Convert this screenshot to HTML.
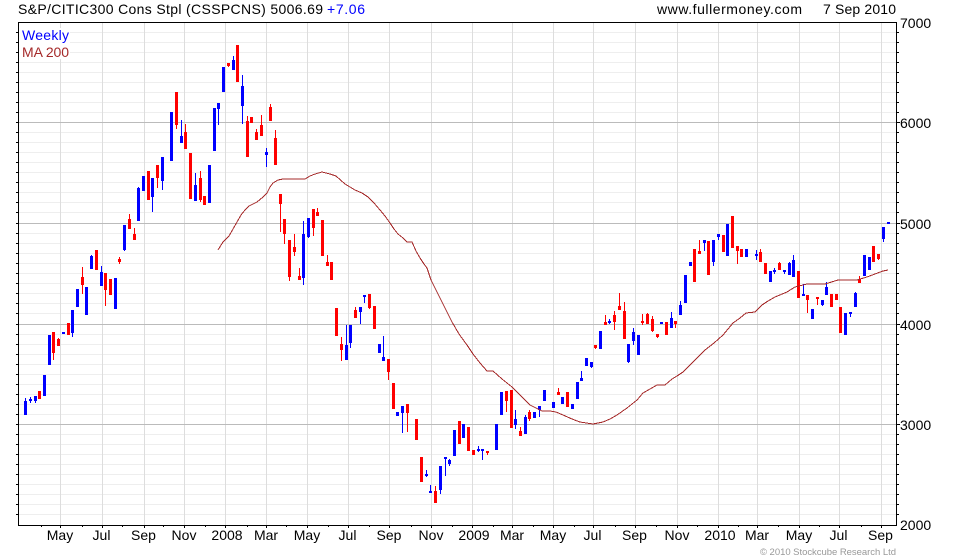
<!DOCTYPE html>
<html><head><meta charset="utf-8"><title>Chart</title>
<style>
html,body{margin:0;padding:0;background:#fff;width:980px;height:560px;overflow:hidden}
svg{display:block}
text{font-family:"Liberation Sans",Arial,sans-serif;font-size:14px;fill:#000}
</style></head><body>
<svg width="980" height="560" viewBox="0 0 980 560" xmlns="http://www.w3.org/2000/svg">
<rect width="980" height="560" fill="#fff"/>
<g shape-rendering="crispEdges" fill="none">
<path stroke="#eeeeee" d="M18 32.5H896M18 42.5H896M18 52.5H896M18 62.5H896M18 72.5H896M18 82.5H896M18 92.5H896M18 102.5H896M18 112.5H896M18 132.5H896M18 142.5H896M18 152.5H896M18 162.5H896M18 172.5H896M18 182.5H896M18 192.5H896M18 202.5H896M18 212.5H896M18 233.5H896M18 243.5H896M18 253.5H896M18 263.5H896M18 273.5H896M18 283.5H896M18 293.5H896M18 303.5H896M18 313.5H896M18 334.5H896M18 344.5H896M18 354.5H896M18 364.5H896M18 374.5H896M18 384.5H896M18 394.5H896M18 404.5H896M18 414.5H896M18 434.5H896M18 444.5H896M18 454.5H896M18 464.5H896M18 474.5H896M18 484.5H896M18 494.5H896M18 504.5H896M18 514.5H896"/>
<path stroke="#dddddd" d="M60.5 22V525M102.5 22V525M144.5 22V525M184.5 22V525M225.5 22V525M266.5 22V525M307.5 22V525M348.5 22V525M389.5 22V525M431.5 22V525M472.5 22V525M512.5 22V525M553.5 22V525M593.5 22V525M635.5 22V525M677.5 22V525M718.5 22V525M757.5 22V525M799.5 22V525M839.5 22V525M881.5 22V525"/>
<path stroke="#bbbbbb" d="M18 122.5H896M18 223.5H896M18 324.5H896M18 424.5H896"/>
<rect x="19" y="28" width="51" height="31" fill="#fff" stroke="none"/>

<!-- blue bodies -->
<path stroke="#0000ff" stroke-width="3" d="M25.5 401V415M30.5 399V401M35.5 396V401M44.5 375V396M49.5 335V365M63.5 332V334M72.5 310V333M77.5 289V307M86.5 287V315M91.5 256V269M101.5 272V286M115.5 278V309M124.5 225V250M138.5 188V221M143.5 176V191M152.5 178V197M162.5 157V181M171.5 112V161M181.5 136V143M195.5 185V201M209.5 165V203M214.5 108V151M218.5 103V109M223.5 67V92M233.5 60V70M242.5 86V106M266.5 152V155M303.5 234V278M308.5 218V237M346.5 345V360M350.5 325V343M360.5 307V312M364.5 295V297M379.5 344V353M383.5 357V361M397.5 412V416M402.5 406V413M426.5 474V476M430.5 491V493M440.5 466V490M445.5 457V459M449.5 460V464M454.5 430V456M463.5 424V438M478.5 449V451M482.5 449V451M496.5 424V450M501.5 392V415M515.5 419V425M525.5 417V434M534.5 412V418M539.5 406V410M544.5 390V401M553.5 402V408M562.5 397V404M572.5 404V409M577.5 382V399M581.5 378V381M586.5 358V366M591.5 362V367M600.5 331V349M609.5 321V323M628.5 344V362M633.5 332V341M638.5 335V355M661.5 322V324M671.5 318V328M680.5 305V315M685.5 275V303M690.5 262V266M704.5 240V243M713.5 240V262M718.5 234V237M727.5 224V256M746.5 249V257M756.5 254V256M770.5 271V282M774.5 270V272M784.5 270V272M789.5 263V275M793.5 260V277M803.5 294V296M812.5 309V319M822.5 300V305M826.5 287V295M845.5 313V335M850.5 312V314M855.5 293V307M864.5 255V276M869.5 257V270M883.5 227V239M888.5 222V224"/>
<!-- blue wicks -->
<path stroke="#0000ff" stroke-width="1" d="M25.5 398V415M30.5 397V403M35.5 396V403M72.5 310V337M91.5 255V269M101.5 266V286M124.5 225V251M138.5 187V221M152.5 178V212M162.5 157V190M181.5 120V143M195.5 173V201M218.5 103V125M233.5 56V70M242.5 75V124M266.5 148V167M303.5 221V285M308.5 218V238M346.5 325V360M350.5 325V348M360.5 307V324M364.5 295V303M383.5 336V361M402.5 406V433M426.5 470V477M430.5 485V493M440.5 466V494M445.5 457V476M449.5 459V466M478.5 446V452M482.5 449V460M515.5 410V429M525.5 415V434M539.5 406V417M581.5 371V381M591.5 362V368M609.5 319V324M628.5 344V363M633.5 328V345M671.5 312V328M680.5 301V315M704.5 240V251M713.5 240V266M718.5 234V240M756.5 250V260M774.5 268V274M784.5 270V274M789.5 262V275M793.5 255V277M803.5 284V296M822.5 300V306M826.5 282V295M850.5 312V317M855.5 292V307M883.5 227V242"/>
<!-- red bodies -->
<path stroke="#ff0000" stroke-width="3" d="M39.5 391V399M53.5 332V353M58.5 339V346M68.5 323V335M82.5 277V285M96.5 250V270M105.5 273V290M110.5 279V295M119.5 259V262M129.5 219V229M134.5 234V240M148.5 171V200M157.5 165V178M176.5 92V125M185.5 132V149M190.5 153V199M200.5 178V200M204.5 196V205M228.5 63V66M237.5 45V82M247.5 121V157M251.5 117V123M256.5 132V140M261.5 125V136M270.5 107V121M275.5 138V165M280.5 194V204M284.5 219V234M289.5 240V277M294.5 247V252M299.5 276V280M313.5 209V228M317.5 212V216M322.5 220V256M327.5 262V266M331.5 262V280M336.5 308V336M341.5 344V350M355.5 310V318M369.5 294V308M374.5 306V329M388.5 359V372M393.5 383V409M407.5 404V413M416.5 419V440M421.5 457V482M435.5 491V503M459.5 421V444M468.5 427V451M473.5 450V455M487.5 451V453M506.5 391V401M511.5 390V428M520.5 431V436M529.5 412V419M558.5 392V395M567.5 392V407M595.5 345V348M605.5 322V325M614.5 315V322M619.5 306V310M624.5 311V339M642.5 321V323M647.5 314V324M652.5 319V331M657.5 334V337M666.5 322V335M675.5 321V324M694.5 249V282M699.5 251V254M708.5 241V275M723.5 235V252M732.5 216V248M737.5 246V251M741.5 249V257M760.5 252V262M765.5 263V274M779.5 263V270M798.5 271V298M807.5 295V300M817.5 297V299M831.5 294V307M836.5 294V300M840.5 307V333M859.5 279V283M873.5 246V262M878.5 254V259"/>
<!-- red wicks -->
<path stroke="#ff0000" stroke-width="1" d="M53.5 332V360M58.5 338V346M82.5 267V294M105.5 273V306M119.5 257V264M129.5 214V229M134.5 228V240M157.5 165V188M176.5 92V129M185.5 124V149M200.5 171V202M228.5 63V67M247.5 116V157M256.5 129V140M261.5 115V136M270.5 104V121M275.5 130V165M280.5 194V232M284.5 219V244M289.5 240V281M294.5 234V256M299.5 268V280M313.5 209V236M317.5 208V216M327.5 255V266M341.5 337V361M355.5 307V318M369.5 294V309M388.5 359V380M407.5 404V432M435.5 486V503M487.5 451V455M506.5 391V412M520.5 427V436M529.5 410V421M558.5 388V395M595.5 345V349M605.5 315V325M614.5 311V330M619.5 293V310M624.5 302V339M642.5 314V325M647.5 313V324M652.5 316V332M657.5 334V338M675.5 321V328M699.5 240V254M737.5 246V264M760.5 249V262M779.5 262V270M807.5 295V313M817.5 297V305M859.5 276V283M878.5 254V260"/>

<!-- axes -->
<path stroke="#000" d="M18.5 22V526M18 22.5H897M896.5 22V526M18 525.5H897"/>
<path stroke="#000" d="M16 32.5h2M16 42.5h2M16 52.5h2M16 62.5h2M16 72.5h2M16 82.5h2M16 92.5h2M16 102.5h2M16 112.5h2M16 122.5h2M16 132.5h2M16 142.5h2M16 152.5h2M16 162.5h2M16 172.5h2M16 182.5h2M16 192.5h2M16 202.5h2M16 212.5h2M16 223.5h2M16 233.5h2M16 243.5h2M16 253.5h2M16 263.5h2M16 273.5h2M16 283.5h2M16 293.5h2M16 303.5h2M16 313.5h2M16 324.5h2M16 334.5h2M16 344.5h2M16 354.5h2M16 364.5h2M16 374.5h2M16 384.5h2M16 394.5h2M16 404.5h2M16 414.5h2M16 424.5h2M16 434.5h2M16 444.5h2M16 454.5h2M16 464.5h2M16 474.5h2M16 484.5h2M16 494.5h2M16 504.5h2M16 514.5h2"/>
<path stroke="#000" d="M897 32.5h2M897 42.5h2M897 52.5h2M897 62.5h2M897 72.5h2M897 82.5h2M897 92.5h2M897 102.5h2M897 112.5h2M897 122.5h3M897 132.5h2M897 142.5h2M897 152.5h2M897 162.5h2M897 172.5h2M897 182.5h2M897 192.5h2M897 202.5h2M897 212.5h2M897 223.5h3M897 233.5h2M897 243.5h2M897 253.5h2M897 263.5h2M897 273.5h2M897 283.5h2M897 293.5h2M897 303.5h2M897 313.5h2M897 324.5h3M897 334.5h2M897 344.5h2M897 354.5h2M897 364.5h2M897 374.5h2M897 384.5h2M897 394.5h2M897 404.5h2M897 414.5h2M897 424.5h3M897 434.5h2M897 444.5h2M897 454.5h2M897 464.5h2M897 474.5h2M897 484.5h2M897 494.5h2M897 504.5h2M897 514.5h2"/>
<path stroke="#000" d="M60.5 526v2M102.5 526v2M144.5 526v2M184.5 526v2M225.5 526v2M266.5 526v2M307.5 526v2M348.5 526v2M389.5 526v2M431.5 526v2M472.5 526v2M512.5 526v2M553.5 526v2M593.5 526v2M635.5 526v2M677.5 526v2M718.5 526v2M757.5 526v2M799.5 526v2M839.5 526v2M881.5 526v2M41.5 526v1M82.5 526v1M122.5 526v1M163.5 526v1M205.5 526v1M247.5 526v1M286.5 526v1M328.5 526v1M369.5 526v1M411.5 526v1M452.5 526v1M493.5 526v1M533.5 526v1M574.5 526v1M615.5 526v1M656.5 526v1M697.5 526v1M738.5 526v1M778.5 526v1M819.5 526v1M861.5 526v1"/>
</g>

<!-- MA line -->
<polyline fill="none" stroke="#a52a2a" stroke-width="1" shape-rendering="crispEdges" points="218,250 223,242 229,236 233,229 237,222 241,215 245,210 249,206 257,202 263,197 267,193 270,187 273,183 278,180 283,179 295,179 305,179 310,176 315,174 322,172 330,174 336,176 345,184 355,190 362,193 368,197 374,203 380,210 385,216 390,223 394,229 398,234 403,238 407,242 412,242 416,251 420,258 424,264 427,268 431,280 436,290 440,298 446,310 452,322 459,334 467,345 473,354 480,363 487,371 493,371 502,379 512,387 521,396 530,405 536,408 542,411 550,411 556,412 563,415 572,419 580,422 593,424 603,422 610,419 617,415 627,408 637,400 643,393 650,389 657,385 665,385 672,379 677,376 683,372 694,361 705,350 714,343 723,335 733,323 740,318 746,313 755,312 762,305 768,301 775,297 787,292 795,287 807,284 825,284 838,280 857,280 867,277 875,274 883,271 888,270"/>

<!-- text -->
<text x="18" y="14" textLength="305" lengthAdjust="spacing">S&amp;P/CITIC300 Cons Stpl (CSSPCNS) 5006.69</text>
<text x="327" y="14" textLength="38" lengthAdjust="spacing" style="fill:#0000ff">+7.06</text>
<text x="657" y="14" textLength="145" lengthAdjust="spacing">www.fullermoney.com</text>
<text x="823" y="14" textLength="73" lengthAdjust="spacing">7 Sep 2010</text>
<text x="22" y="40" textLength="47" lengthAdjust="spacing" style="fill:#0000ff">Weekly</text>
<text x="22" y="57" textLength="47" lengthAdjust="spacing" style="fill:#a52a2a">MA 200</text>

<text x="900" y="28">7000</text>
<text x="900" y="128">6000</text>
<text x="900" y="229">5000</text>
<text x="900" y="330">4000</text>
<text x="900" y="430">3000</text>
<text x="900" y="530">2000</text>

<g text-anchor="middle">
<text x="60" y="540">May</text>
<text x="101.5" y="540">Jul</text>
<text x="143.5" y="540">Sep</text>
<text x="184" y="540">Nov</text>
<text x="227" y="540">2008</text>
<text x="266" y="540">Mar</text>
<text x="307" y="540">May</text>
<text x="347.5" y="540">Jul</text>
<text x="389" y="540">Sep</text>
<text x="431" y="540">Nov</text>
<text x="474" y="540">2009</text>
<text x="512" y="540">Mar</text>
<text x="553" y="540">May</text>
<text x="592.5" y="540">Jul</text>
<text x="634.5" y="540">Sep</text>
<text x="677" y="540">Nov</text>
<text x="720" y="540">2010</text>
<text x="757" y="540">Mar</text>
<text x="799" y="540">May</text>
<text x="838.5" y="540">Jul</text>
<text x="880.5" y="540">Sep</text>
</g>
<text x="760" y="555" textLength="136" lengthAdjust="spacing" style="font-size:9.5px;fill:#999999">© 2010 Stockcube Research Ltd</text>
</svg>
</body></html>
